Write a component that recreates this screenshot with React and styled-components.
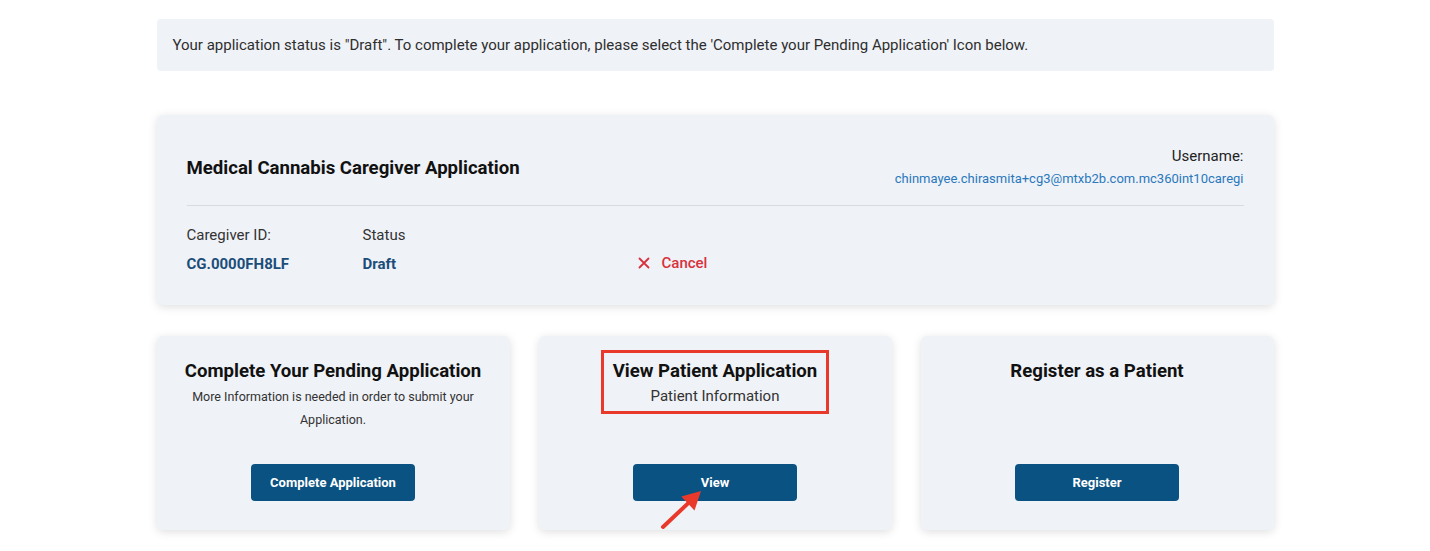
import React from 'react'
import styled, { createGlobalStyle } from 'styled-components'

const PRIMARY = '#0a5281'
const CARD_BG = '#eff2f7'
const RED = '#e8392b'

const GlobalStyle = createGlobalStyle`
    body {
        margin: 0;
        background: #ffffff;
        font-family: Roboto, "Liberation Sans", sans-serif;
        color: #222;
    }
`

const Page = styled.div`
    width: 1117px;
    margin: 0 auto;
    padding: 19px 0 20px;
`

const Banner = styled.div`
    height: 52px;
    display: flex;
    align-items: center;
    padding-left: 16px;
    background: ${CARD_BG};
    border-radius: 4px;
    font-size: 15px;
    color: #2e2e2e;
    margin-bottom: 44px;
`

const MainCard = styled.div`
    background: ${CARD_BG};
    border-radius: 6px;
    box-shadow: 0 2px 10px rgba(0, 0, 0, 0.13);
    padding: 30px 30px 30px;
    margin-bottom: 31px;
`

const Header = styled.div`
    display: flex;
    justify-content: space-between;
    align-items: center;
    padding-bottom: 15px;
    border-bottom: 1px solid #d7dbe2;
`

const AppTitle = styled.div`
    font-size: 18.6px;
    font-weight: 700;
    color: #111;
`

const UserBlock = styled.div`
    text-align: right;
`

const UserLabel = styled.div`
    font-size: 15px;
    line-height: 22px;
    color: #222;
`

const UserEmail = styled.div`
    font-size: 13px;
    line-height: 23px;
    color: #2a78bd;
`

const Details = styled.div`
    display: grid;
    grid-template-columns: 176px 275px auto;
    grid-template-rows: 22px 22px;
    row-gap: 7px;
    margin-top: 18px;
    align-items: center;
`

const Label = styled.div`
    font-size: 15px;
    color: #333;
`

const Value = styled.div`
    font-size: 15px;
    font-weight: 700;
    color: #1b4d7a;
`

const CancelLink = styled.div`
    display: flex;
    align-items: center;
    gap: 12px;
    margin-top: -2px;
    font-size: 15px;
    font-weight: 500;
    color: #d8313c;
`

const CardRow = styled.div`
    display: grid;
    grid-template-columns: repeat(3, 1fr);
    gap: 29px;
`

const ActionCard = styled.div`
    position: relative;
    height: 194px;
    box-sizing: border-box;
    display: flex;
    flex-direction: column;
    align-items: center;
    padding: 23px 20px 29px;
    background: ${CARD_BG};
    border-radius: 6px;
    box-shadow: 0 2px 10px rgba(0, 0, 0, 0.13);
    text-align: center;
`

const CardTitle = styled.div`
    font-size: 18.6px;
    line-height: 24px;
    font-weight: 700;
    color: #111;
`

const CardText = styled.div`
    max-width: 295px;
    font-size: ${p => (p.$large ? '15px' : '12.5px')};
    line-height: 23px;
    color: #333;
    margin-top: 2px;
`

const Highlight = styled.div`
    border: 3px solid ${RED};
    padding: 6px 9px 3px;
    margin-top: -9px;
    margin-bottom: -6px;
`

const Button = styled.button`
    margin-top: auto;
    width: 164px;
    height: 37px;
    border: none;
    border-radius: 4px;
    background: ${PRIMARY};
    color: #fff;
    font-family: Roboto, "Liberation Sans", sans-serif;
    font-size: 13px;
    font-weight: 700;
    cursor: pointer;
`

const Arrow = styled.svg`
    position: absolute;
    left: 118px;
    top: 148px;
`

const CloseIcon = () => (
    <svg width="12" height="12" viewBox="0 0 12 12">
        <path d="M1.5 1.5 L10.5 10.5 M10.5 1.5 L1.5 10.5" stroke="#d8313c" strokeWidth="1.8" strokeLinecap="round" />
    </svg>
)

export default function App() {
    return (
        <>
            <GlobalStyle />
            <Page>
                <Banner>
                    Your application status is "Draft". To complete your application, please select the 'Complete your Pending Application' Icon below.
                </Banner>

                <MainCard>
                    <Header>
                        <AppTitle>Medical Cannabis Caregiver Application</AppTitle>
                        <UserBlock>
                            <UserLabel>Username:</UserLabel>
                            <UserEmail>chinmayee.chirasmita+cg3@mtxb2b.com.mc360int10caregi</UserEmail>
                        </UserBlock>
                    </Header>
                    <Details>
                        <Label>Caregiver ID:</Label>
                        <Label>Status</Label>
                        <div />
                        <Value>CG.0000FH8LF</Value>
                        <Value>Draft</Value>
                        <CancelLink>
                            <CloseIcon />
                            Cancel
                        </CancelLink>
                    </Details>
                </MainCard>

                <CardRow>
                    <ActionCard>
                        <CardTitle>Complete Your Pending Application</CardTitle>
                        <CardText>More Information is needed in order to submit your Application.</CardText>
                        <Button>Complete Application</Button>
                    </ActionCard>

                    <ActionCard>
                        <Highlight>
                            <CardTitle>View Patient Application</CardTitle>
                            <CardText $large>Patient Information</CardText>
                        </Highlight>
                        <Button>View</Button>
                        <Arrow width="50" height="50" viewBox="0 0 50 50">
                            <line x1="6" y1="43" x2="31" y2="19.4" stroke={RED} strokeWidth="4" strokeLinecap="round" />
                            <polygon points="44,7 37.5,26.5 24.3,12.5" fill={RED} />
                        </Arrow>
                    </ActionCard>

                    <ActionCard>
                        <CardTitle>Register as a Patient</CardTitle>
                        <Button>Register</Button>
                    </ActionCard>
                </CardRow>
            </Page>
        </>
    )
}
